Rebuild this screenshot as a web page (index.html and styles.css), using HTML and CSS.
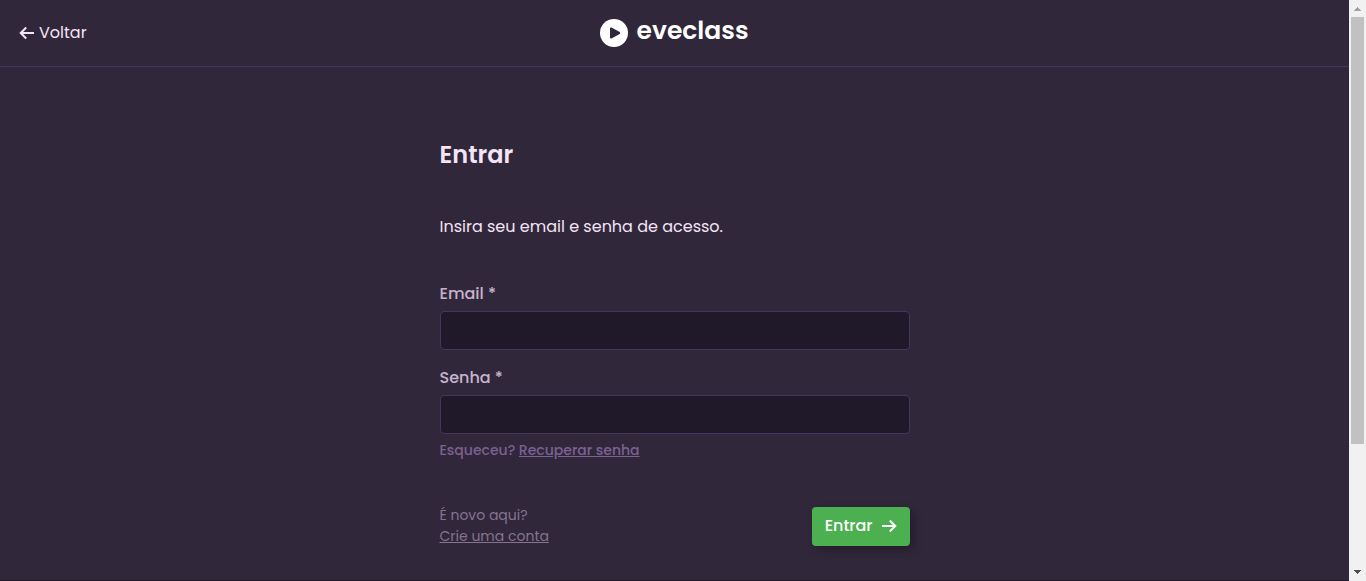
FILE: index.html
```html
<!DOCTYPE html>
<html lang="pt-BR">
<head>
<meta charset="utf-8">
<meta name="viewport" content="width=device-width, initial-scale=1">
<title>Entrar - eveclass</title>
<link rel="stylesheet" href="styles.css">
</head>
<body>
<div class="window">
  <div class="page">
    <header class="topbar">
      <a class="back" href="#">
        <svg class="back-icon" viewBox="0 0 16 14" aria-hidden="true"><path d="M7.200 1.500 1.700 7l5.500 5.500M1.700 7H15"/></svg>
        <span>Voltar</span>
      </a>
      <a class="brand" href="#">
        <svg class="brand-icon" viewBox="0 0 28 28" aria-hidden="true"><circle class="brand-disc" cx="14" cy="14" r="14"/><path class="brand-play" d="M11 9.500v9l8.200-4.500z"/></svg>
        <span>eveclass</span>
      </a>
    </header>
    <main class="content">
      <h1 class="title">Entrar</h1>
      <p class="intro">Insira seu email e senha de acesso.</p>
      <form class="form">
        <div class="field">
          <label class="label" for="email">Email *</label>
          <input class="input" id="email" type="email" required>
        </div>
        <div class="field">
          <label class="label" for="senha">Senha *</label>
          <input class="input" id="senha" type="password" required>
        </div>
        <p class="forgot">Esqueceu? <a href="#">Recuperar senha</a></p>
        <div class="actions">
          <p class="signup">É novo aqui?<br><a href="#">Crie uma conta</a></p>
          <button class="submit" type="submit">
            <span>Entrar</span>
            <svg class="submit-icon" viewBox="0 0 16 14" aria-hidden="true"><path d="M8.800 1.500 14.300 7l-5.500 5.500M14 7H1"/></svg>
          </button>
        </div>
      </form>
    </main>
    <footer class="footer"></footer>
  </div>
  <div class="scrollbar" aria-hidden="true">
    <svg class="scroll-arrow" viewBox="0 0 17 17"><path fill="#a3a3a3" d="M5 11h7v-1h-1V9h-1V8H9V7H8v1H7v1H6v1H5z"/></svg>
    <div class="scroll-track"><div class="scroll-thumb"></div></div>
    <svg class="scroll-arrow" viewBox="0 0 17 17"><path fill="#505050" d="M5 6h7v1h-1v1h-1v1H9v1H8V9H7V8H6V7H5z"/></svg>
  </div>
</div>
</body>
</html>
```

FILE: styles.css
```css
* { box-sizing: border-box; }
body {
  margin: 0;
  background: #30273b;
  color: #f5e4f5;
  font: 16px/24px Poppins, Inter, sans-serif;
}
a { color: inherit; }
h1, p { margin: 0; }
.window { display: flex; height: 100vh; }
.page {
  flex: 1;
  min-width: 0;
  display: flex;
  flex-direction: column;
  overflow: hidden;
}
.topbar {
  display: grid;
  grid-template-columns: 1fr auto 1fr;
  align-items: center;
  flex: none;
  height: 67px;
  padding: 0 19px;
  border-bottom: 1px solid #43365f;
}
.back {
  display: flex;
  align-items: center;
  gap: 4px;
  justify-self: start;
  text-decoration: none;
}
.back-icon { width: 16px; height: 14px; fill: none; stroke: currentColor; stroke-width: 2; }
.brand {
  display: flex;
  align-items: center;
  gap: 8px;
  color: #fff;
  font-size: 25px;
  font-weight: 600;
  text-decoration: none;
}
.brand span { padding-bottom: 4px; }
.brand-icon { width: 28px; height: 28px; }
.brand-disc { fill: #fff; }
.brand-play { fill: #30273b; stroke: #30273b; stroke-width: 2; stroke-linejoin: round; }
.content {
  flex: 1 0 auto;
  width: 100%;
  max-width: 470px;
  margin: 0 auto;
  padding-top: 70px;
}
.title { font-size: 24px; line-height: 36px; font-weight: 600; }
.intro { margin-top: 42px; }
.form { margin-top: 43px; }
.field { margin-bottom: 16px; }
.label { display: block; margin-bottom: 5px; color: #c7b3cf; font-weight: 500; }
.input {
  display: block;
  width: 100%;
  height: 39px;
  padding: 0 12px;
  border: 1px solid #43365f;
  border-radius: 4px;
  background: #20192a;
  color: inherit;
  font: inherit;
}
.forgot { margin-top: -10px; color: #7d6193; font-size: 14px; font-weight: 500; line-height: 21px; }
.actions {
  display: flex;
  justify-content: space-between;
  align-items: center;
  margin-top: 44px;
}
.signup { color: #86738f; font-size: 14px; line-height: 21px; }
.submit {
  display: flex;
  align-items: center;
  gap: 8px;
  height: 39px;
  padding: 0 13px;
  border: 0;
  border-radius: 4px;
  background: #4caf50;
  box-shadow: 4px 4px 8px rgba(0, 0, 0, 0.25);
  color: #fff;
  font: inherit;
  font-weight: 500;
}
.submit-icon { width: 16px; height: 14px; fill: none; stroke: currentColor; stroke-width: 2; }
.footer { flex: none; height: 1px; background: #20192a; }
.scrollbar { flex: none; display: flex; flex-direction: column; width: 17px; background: #f1f1f1; }
.scroll-arrow { flex: none; width: 17px; height: 17px; }
.scroll-track { flex: 1; padding: 0 2px; }
.scroll-thumb { height: 78%; background: #c1c1c1; }
```
